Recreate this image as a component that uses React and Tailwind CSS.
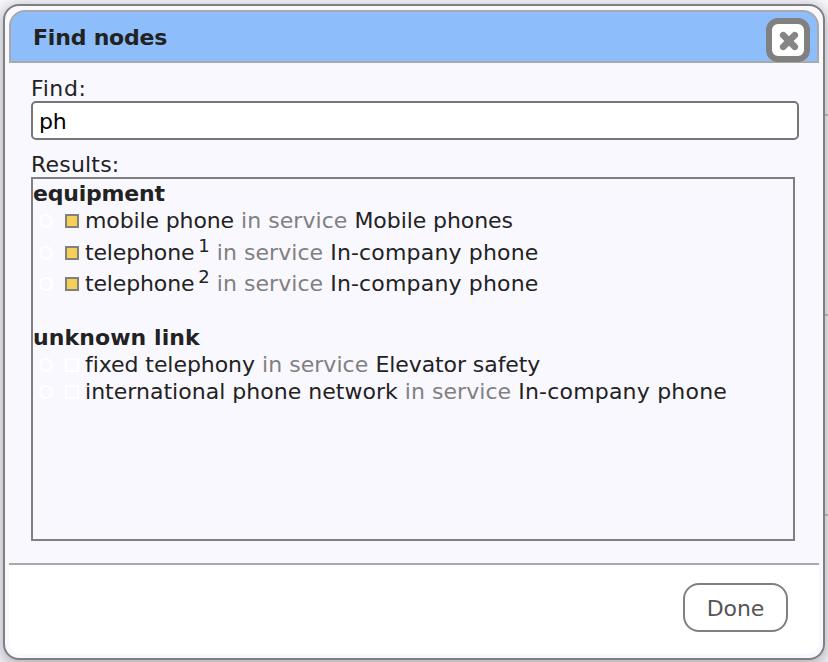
const groups = [
  {
    title: 'equipment',
    tracking: 'tracking-[-0.2px]',
    nodes: [
      { name: 'mobile phone', service: 'Mobile phones', tracking: 'tracking-[-0.12px]', serviceTracking: 'tracking-[-0.08px]', filled: true },
      { name: 'telephone', sup: '1', service: 'In-company phone', tracking: 'tracking-[-0.15px]', serviceTracking: 'tracking-[0.17px]', filled: true, height: 'h-8' },
      { name: 'telephone', sup: '2', service: 'In-company phone', tracking: 'tracking-[-0.15px]', serviceTracking: 'tracking-[0.17px]', filled: true, height: 'h-[31px]' },
    ],
  },
  {
    title: 'unknown link',
    tracking: 'tracking-[0.08px]',
    nodes: [
      { name: 'fixed telephony', service: 'Elevator safety', tracking: 'tracking-[-0.06px]', serviceTracking: 'tracking-[-0.08px]' },
      { name: 'international phone network', service: 'In-company phone', tracking: 'tracking-[0.02px]', serviceTracking: 'tracking-[0.2px]' },
    ],
  },
];

function NodeRow({ node }) {
  return (
    <li className={`flex items-end pl-1.5 ${node.height || 'h-[27px]'}`}>
      <span className="mb-[5px] size-3.5 shrink-0 rounded-full border-2 border-white" />
      <span
        className={`mb-[5px] ml-3 size-3.5 shrink-0 border-2 ${
          node.filled ? 'border-[#808080] bg-[#f7cf56]' : 'border-white'
        }`}
      />
      <span className="-mb-px ml-1.5 whitespace-pre leading-[27px]">
        <span className={node.tracking}>{node.name}</span>
        {node.sup && <sup className="relative -top-2 ml-1 align-baseline text-[18px] leading-none">{node.sup}</sup>}
        <span className="tracking-[0.05px] text-[#808080]"> in service </span>
        <span className={node.serviceTracking}>{node.service}</span>
      </span>
    </li>
  );
}

function CloseButton() {
  return (
    <button className="flex size-11 items-center justify-center rounded-xl border-[6px] border-[#808080] bg-white">
      <svg viewBox="0 0 20 20" className="size-5 translate-x-px translate-y-px blur-[0.4px]">
        <path d="M4.2 4.2L15.8 15.8M15.8 4.2L4.2 15.8" stroke="#858585" strokeWidth="6.6" strokeLinecap="round" />
      </svg>
    </button>
  );
}

export default function App() {
  return (
    <div className="relative h-[662px] w-[828px] overflow-hidden bg-[#f9f8ff] pl-[3px] pt-1 font-['Verdana','DejaVu_Sans',sans-serif] text-[22px] text-[#222]">
      <div className="absolute right-0 top-[114px] h-[402px] w-1 border-y-2 border-[#c8c8c8]" />
      <div className="absolute right-0 top-[314px] h-0.5 w-1 bg-[#c8c8c8]" />
      <div className="relative flex h-[656px] w-[822px] flex-col rounded-2xl border-2 border-[#808080] bg-[#f9f8ff] p-1 shadow-[0_4px_16px_2px_rgba(0,0,0,0.3)]">
        <header className="flex h-[53px] items-center justify-between rounded-t-2xl border-2 border-[#a9a9a9] bg-[#8dbdfb] pl-[22px] pr-[7px]">
          <h1 className="pt-0.5 font-bold leading-[27px] tracking-[-0.2px]">Find nodes</h1>
          <div className="pt-1.5"><CloseButton /></div>
        </header>

        <main className="flex h-[500px] flex-col px-[22px] pt-3">
          <label className="h-[26px] leading-[27px] tracking-[0.6px]">Find:</label>
          <input
            readOnly
            value="ph"
            className="h-[39px] w-[768px] shrink-0 rounded-[5px] border-2 border-[#767676] bg-white px-1.5 pt-0.5 tracking-[-0.2px] text-black outline-none"
          />
          <div className="mt-[11px] h-[26px] leading-[27px] tracking-[0.2px]">Results:</div>
          <div className="h-[364px] w-[764px] border-2 border-[#808080]">
            {groups.map((group) => (
              <section key={group.title} className="mb-[27px]">
                <h2 className={`h-[27px] font-bold leading-[27px] pt-px ${group.tracking}`}>{group.title}</h2>
                <ul>
                  {group.nodes.map((node, i) => <NodeRow key={i} node={node} />)}
                </ul>
              </section>
            ))}
          </div>
        </main>

        <footer className="flex h-[91px] items-start justify-end rounded-b-xl border-t-2 border-[#a9a9a9] bg-white pr-[31px] pt-[18px]">
          <button className="h-[49px] w-[105px] rounded-2xl border-2 border-[#808080] bg-white pt-0.5 tracking-[-0.1px] text-[#555]">Done</button>
        </footer>
      </div>
    </div>
  );
}
